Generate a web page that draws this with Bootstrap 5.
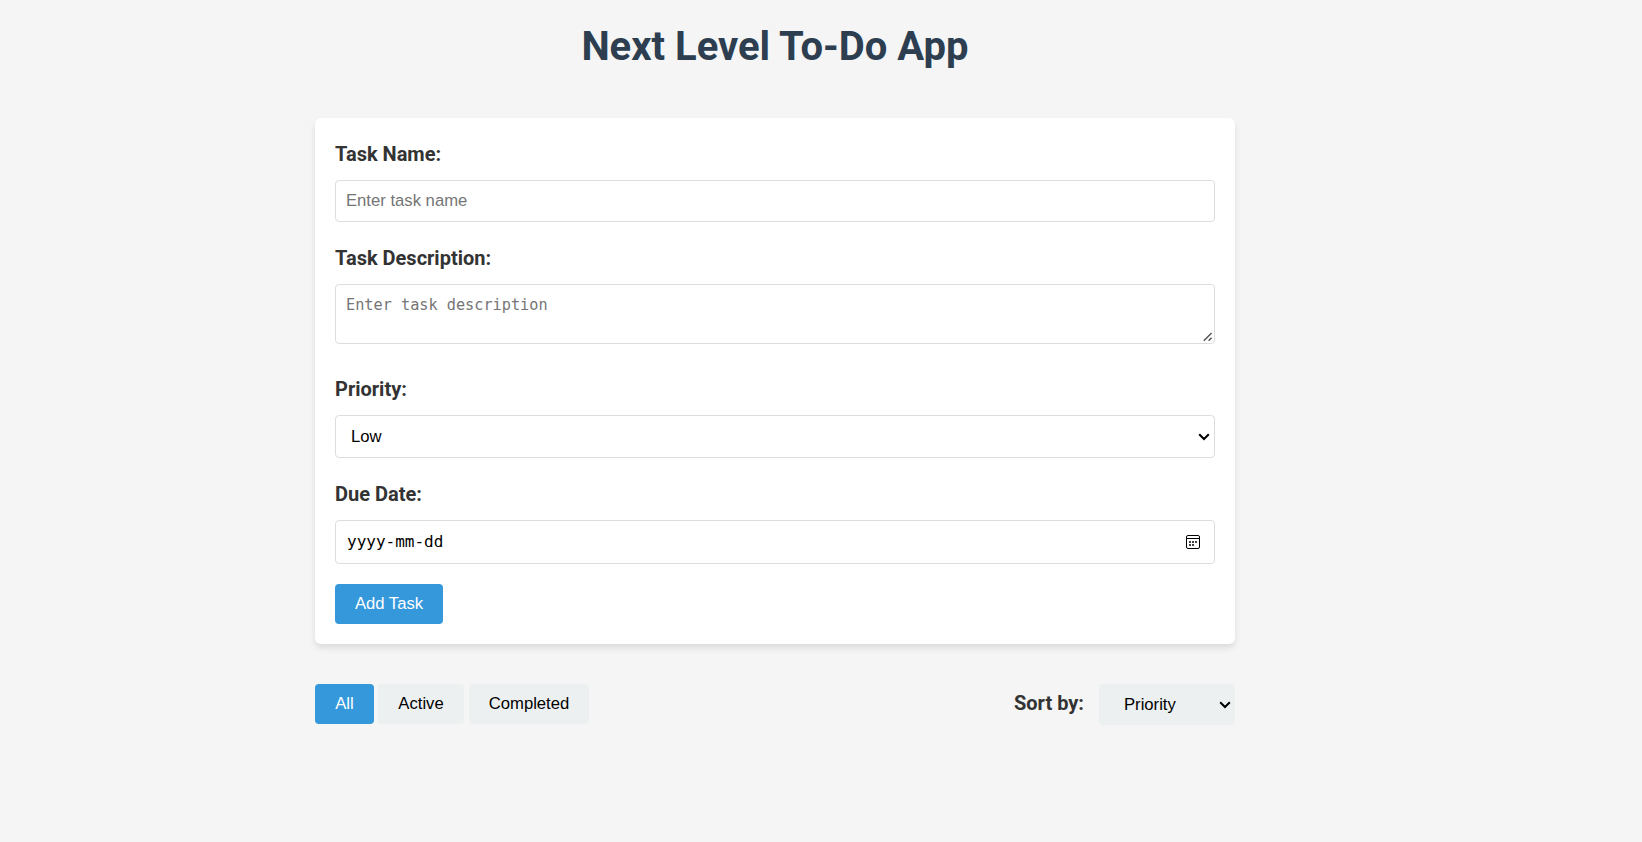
<!DOCTYPE html>
<html lang="en">
<head>
<meta charset="utf-8">
<meta name="viewport" content="width=device-width, initial-scale=1">
<title>Next Level To-Do App</title>
<link rel="stylesheet" href="https://cdn.jsdelivr.net/npm/bootstrap@5.3.0/dist/css/bootstrap.min.css">
<style>
body{background:#f5f5f5;color:#333;font:20px/1.6 Roboto,sans-serif}
.app-wrap{width:920px;margin-left:315px}
.app-title{font-size:40px;line-height:52px;font-weight:700;color:#2c3e50;padding-top:21px;margin-bottom:45px}
.task-form{border:0;border-radius:6px;padding:20px;box-shadow:0 4px 6px rgba(0,0,0,.1);height:526px;background:#fff}
.task-label{display:block;font-weight:700;line-height:32px;margin-bottom:10px}
.field{display:block;width:100%;border:1px solid #ddd;border-radius:4px;padding:0 10px;background-color:#fff;color:#000;font:16.67px "Liberation Sans",sans-serif;outline:0}
.field::placeholder{color:#757575;opacity:1}
.mono-field,.mono-field::placeholder{font-family:"DejaVu Sans Mono",monospace;font-size:15.23px}
.h-name{height:42px;margin-bottom:20px}
.h-desc{height:60px;padding:11px 10px 8px;margin-bottom:29px;resize:none}
.h-prio{height:43px;margin-bottom:20px}
.h-date{height:44px;padding:0 11px 2px}
.h-date,.h-date::placeholder{color:#000;font-size:16px}
.date-icon{right:15px;top:15px}
.resize-grip{right:2px;bottom:2px}
.sel-arrow{appearance:none;background-image:url("data:image/svg+xml,%3Csvg xmlns='http://www.w3.org/2000/svg' width='12' height='8' viewBox='0 0 12 8'%3E%3Cpath d='M1.2 1.2 6 6l4.8-4.8' fill='none' stroke='%23000' stroke-width='2'/%3E%3C/svg%3E");background-repeat:no-repeat}
.h-prio.sel-arrow{padding:0 15px;background-position:right 4px top 17px}
.app-btn{border:0;border-radius:4px;height:40px;padding:0 0 1px;font:16.67px "Liberation Sans",sans-serif;color:#000;background:#ecf0f1}
.app-btn.on{background:#3498db;color:#fff}
.w-add{width:108px}.w-all{width:59px;margin-right:4px}.w-act{width:86px;margin-right:5px}.w-comp{width:120px}
.form-action{margin-top:20px}
.toolbar-row{margin-top:40px}
.sort-label{margin:3px 15px 0 0}
.sort-box{width:136px;height:41px;border:0;border-radius:4px;padding:0 0 0 25px;background-color:#ecf0f1;background-position:right 4px top 17px;color:#000;font:16.67px "Liberation Sans",sans-serif}
</style>
</head>
<body>
<main class="app-wrap">
<h1 class="app-title text-center">Next Level To-Do App</h1>
<form class="task-form card d-block">
<label class="task-label" for="name">Task Name:</label>
<input id="name" class="field h-name" type="text" placeholder="Enter task name">
<label class="task-label" for="desc">Task Description:</label>
<div class="position-relative">
<textarea id="desc" class="field mono-field h-desc" placeholder="Enter task description"></textarea>
<svg class="resize-grip position-absolute" width="10" height="10" viewBox="0 0 10 10"><path d="M.8 8.8 8.6 1M5.6 8.8l3-3" fill="none" stroke="#555" stroke-width="1.5"/></svg>
</div>
<label class="task-label" for="prio">Priority:</label>
<select id="prio" class="field h-prio sel-arrow"><option>Low</option><option>Medium</option><option>High</option></select>
<label class="task-label" for="due">Due Date:</label>
<div class="position-relative">
<input id="due" class="field mono-field h-date" type="text" placeholder="yyyy-mm-dd">
<svg class="date-icon position-absolute" width="14" height="14" viewBox="0 0 14 14"><rect x=".5" y=".5" width="13" height="13" rx="1.5" fill="none" stroke="#000"/><path d="M1 3.5h12" stroke="#000"/><path d="M3 6h2v2H3zM6 6h2v2H6zM9 6h2v2H9zM3 9h2v2H3zM6 9h2v2H6z" fill="#444"/></svg>
</div>
<div class="d-flex form-action"><button type="button" class="app-btn on w-add">Add Task</button></div>
</form>
<div class="d-flex justify-content-between align-items-start toolbar-row">
<div class="d-flex">
<button class="app-btn on w-all">All</button>
<button class="app-btn w-act">Active</button>
<button class="app-btn w-comp">Completed</button>
</div>
<div class="d-flex align-items-start">
<label class="fw-bold sort-label" for="sort">Sort by:</label>
<select id="sort" class="sort-box sel-arrow"><option>Priority</option><option>Due Date</option></select>
</div>
</div>
</main>
<script src="https://cdn.jsdelivr.net/npm/bootstrap@5.3.0/dist/js/bootstrap.bundle.min.js"></script>
</body>
</html>
